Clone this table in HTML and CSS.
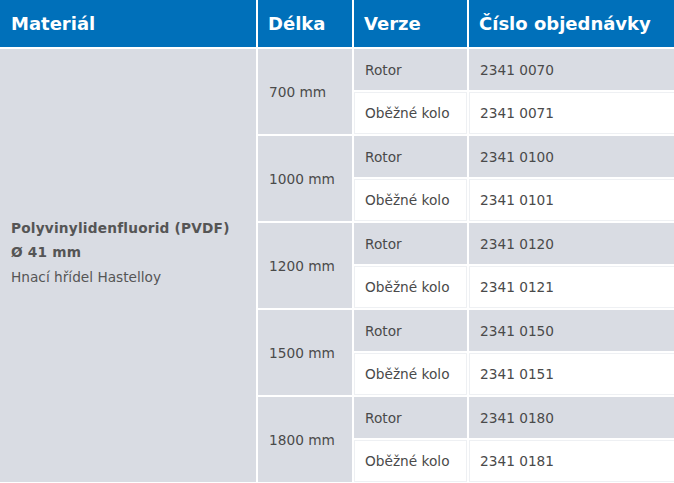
FILE: index.html
```html
<!DOCTYPE html>
<html lang="cs">
<head>
<meta charset="utf-8">
<title>Tabulka</title>
<link rel="stylesheet" href="styles.css">
</head>
<body>
<table class="tbl">
  <colgroup>
    <col class="c1"><col class="c2"><col class="c3"><col class="c4">
  </colgroup>
  <thead>
    <tr class="head">
      <th>Materiál</th><th>Délka</th><th>Verze</th><th>Číslo objednávky</th>
    </tr>
  </thead>
  <tbody>
    <tr class="gray">
      <td class="mat" rowspan="10">
        <div class="mat-in">
          <strong>Polyvinylidenfluorid (PVDF)</strong><br>
          <strong>Ø 41 mm</strong><br>
          Hnací hřídel Hastelloy
        </div>
      </td>
      <td class="len" rowspan="2">700 mm</td><td>Rotor</td><td>2341 0070</td>
    </tr>
    <tr class="white"><td>Oběžné kolo</td><td>2341 0071</td></tr>
    <tr class="gray"><td class="len" rowspan="2">1000 mm</td><td>Rotor</td><td>2341 0100</td></tr>
    <tr class="white"><td>Oběžné kolo</td><td>2341 0101</td></tr>
    <tr class="gray"><td class="len" rowspan="2">1200 mm</td><td>Rotor</td><td>2341 0120</td></tr>
    <tr class="white"><td>Oběžné kolo</td><td>2341 0121</td></tr>
    <tr class="gray"><td class="len" rowspan="2">1500 mm</td><td>Rotor</td><td>2341 0150</td></tr>
    <tr class="white"><td>Oběžné kolo</td><td>2341 0151</td></tr>
    <tr class="gray"><td class="len" rowspan="2">1800 mm</td><td>Rotor</td><td>2341 0180</td></tr>
    <tr class="white"><td>Oběžné kolo</td><td>2341 0181</td></tr>
  </tbody>
</table>
</body>
</html>
```
FILE: styles.css
```css
html, body {
  margin: 0;
  padding: 0;
  background: #fff;
  overflow: hidden;
}
body {
  font-family: "DejaVu Sans", Verdana, sans-serif;
  color: #4a4a4a;
}
.tbl {
  border-collapse: separate;
  border-spacing: 2px;
  table-layout: fixed;
  width: 680px;
  margin: -2px 0 0 -2px;
  background: #fff;
}
.c1 { width: 256px; }
.c2 { width: 94px; }
.c3 { width: 113px; }
.c4 { width: 207px; }

.head th {
  background: #0070ba;
  color: #fff;
  font-size: 18px;
  font-weight: bold;
  text-align: left;
  height: 47px;
  padding: 0 10px;
  vertical-align: middle;
}
.head th:first-child { padding-left: 11px; }

td {
  font-size: 13.7px;
  padding: 0 11px;
  vertical-align: middle;
  text-align: left;
}
.gray td {
  background: #d9dce3;
  height: 41px;
}
.white td {
  background: #fff;
  height: 42px;
  box-shadow: inset 0 0 0 1px #eef0f3;
}
td.len {
  background: #d9dce3;
  padding-left: 11px;
  box-shadow: none;
}
td.mat {
  background: #d9dce3;
  padding: 0 10px 26px 11px;
  color: #555;
  line-height: 24.5px;
}
.mat strong {
  font-weight: bold;
  letter-spacing: 0.2px;
}
```
